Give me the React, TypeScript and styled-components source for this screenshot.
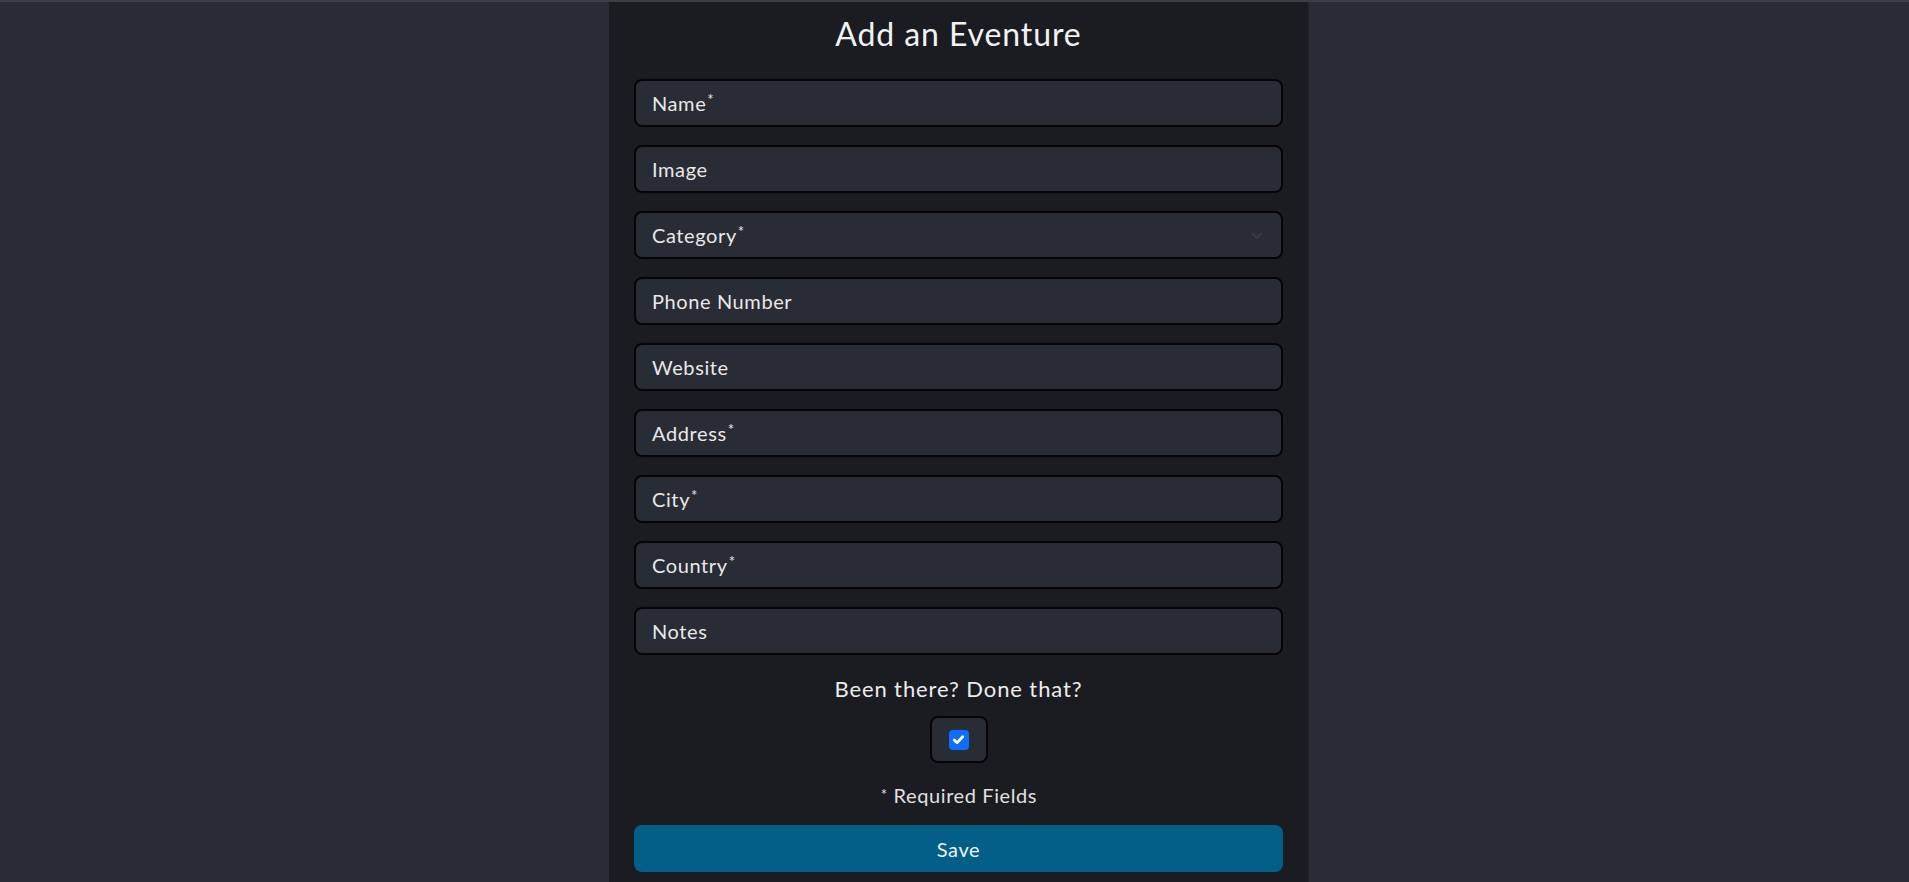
import React, { useState } from "react"
import styled, { createGlobalStyle } from "styled-components"

const GlobalStyle = createGlobalStyle`
  html, body {
    margin: 0;
    padding: 0;
    background: #282c34;
    font-family: Lato, "Open Sans", sans-serif;
    color: #e6e6e6;
  }
  body {
    border-top: 2px solid #3d3f42;
    min-height: 880px;
  }
`

const fields = [
  { label: "Name", required: true },
  { label: "Image" },
  { label: "Category", required: true, select: true },
  { label: "Phone Number" },
  { label: "Website" },
  { label: "Address", required: true },
  { label: "City", required: true },
  { label: "Country", required: true },
  { label: "Notes" },
]

const App = () => {
  const [done, setDone] = useState(true)
  return (
    <>
      <GlobalStyle />
      <Page>
        <Card>
          <Title>Add an Eventure</Title>
          <Fields>
            {fields.map((f) => (
              <Field key={f.label}>
                <span>
                  {f.label}
                  {f.required && <Star>*</Star>}
                </span>
                {f.select && (
                  <Chevron viewBox="0 0 16 16">
                    <path d="M3 6l5 5 5-5" />
                  </Chevron>
                )}
              </Field>
            ))}
          </Fields>
          <Question>Been there? Done that?</Question>
          <CheckWrap onClick={() => setDone(!done)}>
            <Check $checked={done}>
              {done && (
                <svg viewBox="0 0 16 16" width="17" height="17">
                  <path
                    d="M4 8.4l2.6 2.6L12 5.4"
                    fill="none"
                    stroke="#fff"
                    strokeWidth="2.6"
                    strokeLinecap="round"
                    strokeLinejoin="round"
                  />
                </svg>
              )}
            </Check>
          </CheckWrap>
          <Note>
            <Star>*</Star> Required Fields
          </Note>
          <SaveButton>Save</SaveButton>
        </Card>
      </Page>
    </>
  )
}

export default App

const Page = styled.div`
  display: flex;
  justify-content: center;
  padding-left: 9px;
`

const Card = styled.div`
  width: 700px;
  box-sizing: border-box;
  padding: 10px 25px 12px;
  background: #1b1c21;
  border-right: 1px solid #22252b;
  display: flex;
  flex-direction: column;
  align-items: center;
  min-height: 880px;
`

const Title = styled.h1`
  margin: 0;
  font-size: 32px;
  font-weight: 400;
  line-height: 44px;
  letter-spacing: 0.9px;
  color: #f2f2f2;
`

const Fields = styled.div`
  margin-top: 23px;
  width: 100%;
  display: flex;
  flex-direction: column;
  gap: 18px;
`

const Field = styled.div`
  height: 48px;
  box-sizing: border-box;
  border: 2px solid #050505;
  border-radius: 8px;
  background: #282c34;
  padding: 0 16px;
  display: flex;
  align-items: center;
  justify-content: space-between;
  font-size: 20px;
  letter-spacing: 0.6px;
  color: #e8e8e8;
`

const Star = styled.span`
  font-size: 15px;
  vertical-align: top;
  position: relative;
  top: -1px;
  margin-left: 1px;
`

const Chevron = styled.svg`
  width: 16px;
  height: 16px;
  fill: none;
  stroke: #3b3f48;
  stroke-width: 1.6;
`

const Question = styled.div`
  margin-top: 19px;
  font-size: 22px;
  line-height: 30px;
  letter-spacing: 0.9px;
  color: #ececec;
`

const CheckWrap = styled.div`
  margin-top: 12px;
  width: 58px;
  height: 47px;
  box-sizing: border-box;
  border: 2px solid #050505;
  border-radius: 8px;
  background: #282c34;
  display: flex;
  align-items: center;
  justify-content: center;
  cursor: pointer;
`

const Check = styled.div<{ $checked: boolean }>`
  width: 20px;
  height: 20px;
  border-radius: 4px;
  background: ${(p) => (p.$checked ? "#0d6efd" : "#fff")};
  display: flex;
  align-items: center;
  justify-content: center;
`

const Note = styled.div`
  margin-top: 18px;
  font-size: 20px;
  line-height: 28px;
  letter-spacing: 0.6px;
  color: #e0e0e0;
`

const SaveButton = styled.button`
  margin-top: 16px;
  width: 100%;
  height: 47px;
  border: none;
  border-radius: 8px;
  background: #035f87;
  color: #eef3f6;
  font-family: Lato, "Open Sans", sans-serif;
  font-size: 20px;
  letter-spacing: 0.6px;
  cursor: pointer;
`
